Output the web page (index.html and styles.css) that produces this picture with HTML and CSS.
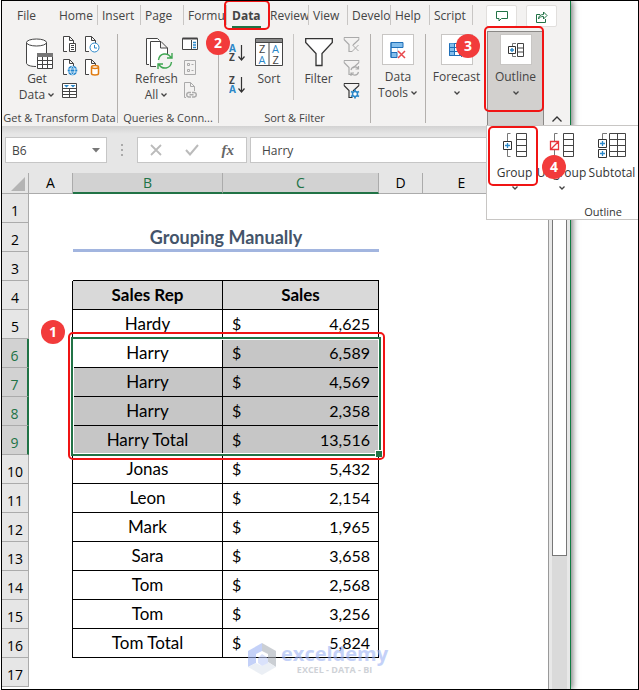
FILE: index.html
```html
<!DOCTYPE html>
<html lang="en">
<head>
    <meta charset="UTF-8">
    <title>Grouping Manually</title>
    <link rel="stylesheet" href="styles.css">
</head>
<body>
    <!-- shared icon shapes -->
    <svg class="defs" aria-hidden="true">
        <symbol id="chev" viewBox="0 0 8 6"><path d="M1.500 1.500 4 4l2.500-2.500" fill="none" stroke="#444" stroke-width="1.300"/></symbol>
        <symbol id="page" viewBox="0 0 16 17"><path d="M5 15.500H1.500V.5h6l4 4V7M7.500.5v4h4" fill="#fff" stroke="#444"/></symbol>
        <symbol id="funnel" viewBox="0 0 16 17"><path d="M.5 1.500h15v2L9.500 9M.5 1.500v2l5 5v7H9" fill="none" stroke="currentColor" stroke-width="1.200"/></symbol>
    </svg>

    <div class="frame">
        <div class="window">
            <div class="ribbon">
                <div class="tabs">
                    <button class="tab file">File</button>
                    <button class="tab">Home</button>
                    <button class="tab">Insert</button>
                    <button class="tab">Page</button>
                    <button class="tab">Formulas</button>
                    <button class="tab narrow active"><span>Data</span></button>
                    <button class="tab">Review</button>
                    <button class="tab narrow">View</button>
                    <button class="tab">Developer</button>
                    <button class="tab narrow">Help</button>
                    <button class="tab">Script</button>
                    <div class="actions">
                        <button class="action" aria-label="Comments"><svg width="12" height="12" viewBox="0 0 12 12"><path d="M.5 1.500h11v7H5.500L3 11V8.500H.5z" fill="none" stroke="#217346"/></svg></button>
                        <button class="action" aria-label="Share"><svg width="13" height="13" viewBox="0 0 13 13"><path d="M5 4.500H1.500v8h9V9M3.500 9c0-3 2-4.500 5-4.500V2L12 5.500 8.500 9V6.500C6 6.500 4.500 7 3.500 9z" fill="none" stroke="#217346"/></svg></button>
                    </div>
                </div>

                <div class="groups">
                    <section class="group get-data">
                        <div class="tools">
                            <button class="big">
                                <svg width="28" height="32" viewBox="0 0 28 32"><path d="M1.500 4.500v21c0 2 4 3.500 10 3.500V27h10V4.500" fill="#fff"/><path d="M11 28.500C5 28.500 1.500 27 1.500 25V4.500M21.500 4.500V15" fill="none" stroke="#444"/><ellipse cx="11.500" cy="4.500" rx="10" ry="3.500" fill="#fff" stroke="#444"/><path d="M12.500 15.500h15v15h-15z" fill="#fff" stroke="#444"/><path d="M12 15h16v4H12z" fill="#777"/><path d="M12.500 22.500h15M12.500 26.500h15M17.500 19v11M22.500 19v11" stroke="#444"/></svg>
                                <span>Get</span><span>Data <svg class="chev"><use href="#chev"/></svg></span>
                            </button>
                            <div class="small two">
                                <button aria-label="From Text/CSV"><svg width="16" height="17" viewBox="0 0 16 17"><use href="#page"/><path d="M7.500 7.500h6v8h-6z" fill="#fff" stroke="#444"/><path d="M9 9.500h3M9 11.500h3M9 13.500h3" stroke="#444"/></svg></button>
                                <button aria-label="Recent Sources"><svg width="16" height="17" viewBox="0 0 16 17"><use href="#page"/><circle cx="10.500" cy="11.500" r="4.500" fill="#fff" stroke="#2b88c9"/><path d="M10.500 9v3H13" fill="none" stroke="#2b88c9"/></svg></button>
                                <button aria-label="From Web"><svg width="16" height="17" viewBox="0 0 16 17"><use href="#page"/><circle cx="10.500" cy="11.500" r="4.800" fill="#1e83cc"/><path d="M6 10h9M6 13h9M10.500 7c-3 3-3 6 0 9M10.500 7c3 3 3 6 0 9" fill="none" stroke="#fff" stroke-width=".8"/></svg></button>
                                <button aria-label="Existing Connections"><svg width="16" height="17" viewBox="0 0 16 17"><use href="#page"/><path d="M7.500 8.500v6c0 2 7 2 7 0v-6" fill="#fff" stroke="#e07b10" stroke-width="1.500"/><ellipse cx="11" cy="8" rx="3.500" ry="1.500" fill="#fff" stroke="#e07b10" stroke-width="1.500"/></svg></button>
                                <button aria-label="From Table/Range"><svg width="16" height="17" viewBox="0 0 16 17"><path d="M.5 1.500h14v14H.5z" fill="#fff" stroke="#444"/><path d="M.5 6.500h14M.5 9.500h14M.5 12.500h14M7.500 6.500v9" stroke="#444"/><path d="M2 3h5L4.500 5.500zM8.500 3h5L11 5.500z" fill="#2b88c9"/></svg></button>
                            </div>
                        </div>
                        <h2>Get &amp; Transform Data</h2>
                    </section>

                    <section class="group queries">
                        <div class="tools">
                            <button class="big">
                                <svg width="28" height="32" viewBox="0 0 28 32"><path d="M4 26.500H1.500V.5h11l2 2" fill="#fff" stroke="#444"/><path d="M11 28.500H5.500v-25H16l6.500 6.500v6M15.500 3.500V10h7" fill="#fff" stroke="#444"/><circle cx="20" cy="23" r="7" fill="#f3f2f1"/><path d="M13.500 22c1-7 9-8 12.500-2.500M27 15v5h-5M26.500 24c-1 7-9 8-12.500 2.500M13 31v-5h5" fill="none" stroke="#3fa652" stroke-width="1.400"/></svg>
                                <span>Refresh</span><span>All <svg class="chev"><use href="#chev"/></svg></span>
                            </button>
                            <div class="small one">
                                <button aria-label="Queries and Connections"><svg width="16" height="17" viewBox="0 0 16 17"><path d="M.5 2.500h15v11H.5z" fill="#fff" stroke="#444"/><path d="M.5 1.500h15v2H.5z" fill="#444"/><path d="M9.500 4v9.500" stroke="#444"/><path d="M11 6.500h3M11 9h3M11 11.500h3" stroke="#2b88c9" stroke-width="1.500"/></svg></button>
                                <button aria-label="Properties" disabled><svg width="16" height="17" viewBox="0 0 16 17"><g fill="none" stroke="#aaa"><path d="M2.500 1.500h11v14h-11zM5.500 4.500h2v2h-2zM5.500 10.500h2v2h-2zM9.500 5.500h2M9.500 11.500h2"/></g></svg></button>
                                <button aria-label="Edit Links" disabled><svg width="16" height="17" viewBox="0 0 16 17"><g fill="none" stroke="#aaa"><path d="M4 15.500H2.500V.5h6l4 4V9M8.500.5v4h4"/><path d="M9 10.500H6.500a2.300 2.300 0 0 0 0 4.500H9M10 10.500h2.500a2.300 2.300 0 0 1 0 4.500H10M7.500 12.800h4" stroke-width="1.500"/></g></svg></button>
                            </div>
                        </div>
                        <h2>Queries &amp; Conn...</h2>
                    </section>

                    <section class="group sorting">
                        <div class="tools">
                            <div class="orders">
                                <button aria-label="Sort A to Z"><svg width="18" height="18" viewBox="0 0 18 18"><text x="0" y="8" class="az blue">A</text><text x="0" y="17" class="az">Z</text><path d="M12.500 1v15M9.500 12.500l3 3.500 3-3.500" fill="none" stroke="#333" stroke-width="1.200"/></svg></button>
                                <button aria-label="Sort Z to A"><svg width="18" height="18" viewBox="0 0 18 18"><text x="0" y="8" class="az">Z</text><text x="0" y="17" class="az blue">A</text><path d="M12.500 1v15M9.500 12.500l3 3.500 3-3.500" fill="none" stroke="#333" stroke-width="1.200"/></svg></button>
                            </div>
                            <button class="big">
                                <svg width="28" height="32" viewBox="0 0 28 32"><path d="M.5 .5h27v27H.5z" fill="#fff" stroke="#444"/><path d="M1 1h26v3H1z" fill="#888"/><path d="M.5 4.500h27M14 4.500v23" stroke="#444"/><g class="sort-letters"><text x="4" y="15">Z</text><text x="3.500" y="26" class="blue">A</text><text x="17" y="15" class="blue">A</text><text x="17.500" y="26">Z</text></g></svg>
                                <span>Sort</span>
                            </button>
                            <button class="big filter">
                                <svg width="28" height="32" viewBox="0 0 28 32"><path d="M.7.7h26.600v3.800L17 15.500v12h-6v-12L.7 4.500z" fill="#fff" stroke="#333" stroke-width="1.300"/></svg>
                                <span>Filter</span>
                            </button>
                            <div class="small one">
                                <button aria-label="Clear" disabled><svg class="dim" width="17" height="17" viewBox="0 0 16 17"><use href="#funnel"/><path d="m9 9 6 6M15 9l-6 6" stroke="currentColor"/></svg></button>
                                <button aria-label="Reapply" disabled><svg class="dim" width="17" height="17" viewBox="0 0 16 17"><use href="#funnel"/><path d="M7.500 11c1-4 6-4 7.500-1M15 7v3h-3M15 13c-1 4-6 4-7.500 1M7.500 17v-3h3" fill="none" stroke="currentColor" stroke-width="1.200"/></svg></button>
                                <button aria-label="Advanced"><svg class="dark" width="17" height="17" viewBox="0 0 16 17"><use href="#funnel"/><circle cx="11.500" cy="12" r="2.500" fill="#fff" stroke="#2b88c9" stroke-width="1.500"/><path d="M11.500 7.500v2M11.500 14.500v2M7.500 9.500l2 1M13.500 13.500l2 1M7.500 14.500l2-1M13.500 10.500l2-1" stroke="#2b88c9" stroke-width="1.800"/></svg></button>
                            </div>
                        </div>
                        <h2>Sort &amp; Filter</h2>
                        <span class="badge badge-2">2</span>
                    </section>

                    <section class="group collapsed">
                        <button class="drop">
                            <span class="tile"><svg width="16" height="18" viewBox="0 0 16 18"><path d="M1 1.500h12v5H1zM1 6.500h6v5H1zM1 11.500h6v5H1z" fill="#83beec" stroke="#1e6fb8"/><path d="M1.500 7h6v4.500h-6z" fill="#fff"/><path d="M1 1.500v15h6M1 11.500h6" fill="none" stroke="#1e6fb8"/><path d="m8 10 7 7M15 10l-7 7" stroke="#e8484d" stroke-width="1.500"/></svg></span>
                            <span>Data</span><span>Tools <svg class="chev"><use href="#chev"/></svg></span>
                        </button>
                    </section>

                    <section class="group forecast">
                        <button class="drop">
                            <span class="tile"><svg width="16" height="18" viewBox="0 0 16 18"><path d="M.5 2.500h15v12H.5z" fill="#fff" stroke="#1e6fb8"/><path d="M.5 2.500h5v12h-5z" fill="#83beec"/><path d="M.5 2.500v12H11M.5 6.500h15M.5 10.500h15M5.500 2.500v12M10.500 2.500v12M12 16l3-3" fill="none" stroke="#1e6fb8"/></svg></span>
                            <span>Forecast</span><span><svg class="chev"><use href="#chev"/></svg></span>
                        </button>
                        <span class="badge badge-3">3</span>
                    </section>

                    <section class="group outline">
                        <button class="drop">
                            <span class="tile"><svg width="18" height="16" viewBox="0 0 18 16"><path d="M9 1.500H5.500V4M5.500 12v2.500H9" fill="none" stroke="#777"/><path d="M1.500 4.500h7v7h-7z" fill="#fff" stroke="#333"/><path d="M3 8h4M5 6v4" stroke="#2b88c9" stroke-width="1.400"/><path d="M10.500 1.500h6v13h-6zM10.500 6h6M10.500 10h6" fill="#fff" stroke="#444"/></svg></span>
                            <span>Outline</span><span><svg class="chev"><use href="#chev"/></svg></span>
                        </button>
                        <div class="mark mark-outline"></div>
                        <div class="popup">
                            <div class="popup-tools">
                                <button>
                                    <svg width="26" height="26" viewBox="0 0 26 26"><path d="M8.500 1.500H5.500V9M5.500 18v6.500H8.500" fill="none" stroke="#777"/><path d="M1.500 9.500h8v8h-8z" fill="#fff" stroke="#333"/><path d="M3 13.500h5M5.500 11v5" stroke="#2b88c9" stroke-width="1.300"/><path d="M14.500 1.500h10v23h-10zM14.500 7.500h10M14.500 13.500h10M14.500 19.500h10" fill="#fff" stroke="#444"/></svg>
                                    <span>Group</span><svg class="chev"><use href="#chev"/></svg>
                                </button>
                                <button>
                                    <svg width="26" height="26" viewBox="0 0 26 26"><path d="M8.500 1.500H5.500V9M5.500 18v6.500H8.500" fill="none" stroke="#777"/><path d="M1.500 9.500h8v8h-8zM2 17l7-7" fill="#fff" stroke="#e8363c" stroke-width="1.300"/><path d="M14.500 1.500h10v23h-10zM14.500 7.500h10M14.500 13.500h10M14.500 19.500h10" fill="#fff" stroke="#444"/></svg>
                                    <span>Ungroup</span><svg class="chev"><use href="#chev"/></svg>
                                </button>
                                <button>
                                    <svg width="30" height="26" viewBox="0 0 30 26"><path d="M10 1.500H5.500V7" fill="none" stroke="#777"/><path d="M1.500 7.500h8v8h-8zM1.500 17.500h8v8h-8z" fill="#fff" stroke="#333"/><path d="M3 11.500h5M5.500 9v5M3 21.500h5M5.500 19v5" stroke="#2b88c9" stroke-width="1.300"/><path d="M12.500 1.500h16v23h-16zM12.500 7.500h16M12.500 13.500h16M12.500 19.500h16M20.500 1.500v23" fill="#fff" stroke="#444"/></svg>
                                    <span>Subtotal</span>
                                </button>
                            </div>
                            <p>Outline</p>
                            <div class="mark mark-group"></div>
                            <span class="badge badge-4">4</span>
                        </div>
                    </section>
                    <button class="collapse" aria-label="Collapse the Ribbon"><svg width="12" height="8" viewBox="0 0 12 8"><path d="m1.500 6.500 4.500-4.500 4.500 4.500" fill="none" stroke="#333" stroke-width="1.300"/></svg></button>
                </div>
                <div class="mark mark-tab"></div>
            </div>

            <div class="formula-bar">
                <div class="name-box">
                    <input type="text" value="B6" aria-label="Name Box">
                    <svg width="8" height="5" viewBox="0 0 8 5"><path d="M0 0h8L4 4.500z" fill="#777"/></svg>
                </div>
                <svg class="grip" width="3" height="12" viewBox="0 0 3 12"><path d="M0 0h2v2H0zM0 5h2v2H0zM0 10h2v2H0z" fill="#aaa"/></svg>
                <div class="fx">
                    <button aria-label="Cancel"><svg width="12" height="12" viewBox="0 0 12 12"><path d="m1 1 10 10M11 1 1 11" stroke="#bbb" stroke-width="1.800"/></svg></button>
                    <button aria-label="Enter"><svg width="14" height="12" viewBox="0 0 14 12"><path d="m1 6 4 4.500L13 1" fill="none" stroke="#bbb" stroke-width="2"/></svg></button>
                    <button class="fx-btn"><i>fx</i></button>
                </div>
                <input class="formula" type="text" value="Harry" aria-label="Formula">
            </div>

            <div class="sheet">
                <div class="cells">
                    <table>
                        <colgroup><col class="c-head"><col class="c-a"><col class="c-b"><col class="c-c"><col class="c-a"><col></colgroup>
                        <thead>
                            <tr><th class="corner"><svg width="14" height="14" viewBox="0 0 14 14"><path d="M14 0v14H0z" fill="#b4b4b4"/></svg></th><th>A</th><th class="on">B</th><th class="on">C</th><th>D</th><th class="last">E</th></tr>
                        </thead>
                        <tbody>
                            <tr><th>1</th><td></td><td></td><td></td></tr>
                            <tr><th>2</th><td></td><td class="title" colspan="2">Grouping Manually</td></tr>
                            <tr><th>3</th><td></td><td class="above"></td><td class="above"></td></tr>
                            <tr class="row head"><th>4</th><td></td><td>Sales Rep</td><td>Sales</td></tr>
                            <tr class="row"><th>5</th><td></td><td>Hardy</td><td><div class="money"><span>$</span><span>4,625</span></div></td></tr>
                            <tr class="row sel first"><th>6</th><td></td><td>Harry</td><td><div class="money"><span>$</span><span>6,589</span></div></td></tr>
                            <tr class="row sel"><th>7</th><td></td><td>Harry</td><td><div class="money"><span>$</span><span>4,569</span></div></td></tr>
                            <tr class="row sel"><th>8</th><td></td><td>Harry</td><td><div class="money"><span>$</span><span>2,358</span></div></td></tr>
                            <tr class="row sel"><th>9</th><td></td><td>Harry Total</td><td><div class="money"><span>$</span><span>13,516</span></div></td></tr>
                            <tr class="row"><th>10</th><td></td><td>Jonas</td><td><div class="money"><span>$</span><span>5,432</span></div></td></tr>
                            <tr class="row"><th>11</th><td></td><td>Leon</td><td><div class="money"><span>$</span><span>2,154</span></div></td></tr>
                            <tr class="row"><th>12</th><td></td><td>Mark</td><td><div class="money"><span>$</span><span>1,965</span></div></td></tr>
                            <tr class="row"><th>13</th><td></td><td>Sara</td><td><div class="money"><span>$</span><span>3,658</span></div></td></tr>
                            <tr class="row"><th>14</th><td></td><td>Tom</td><td><div class="money"><span>$</span><span>2,568</span></div></td></tr>
                            <tr class="row"><th>15</th><td></td><td>Tom</td><td><div class="money"><span>$</span><span>3,256</span></div></td></tr>
                            <tr class="row"><th>16</th><td></td><td>Tom Total</td><td><div class="money"><span>$</span><span>5,824</span></div></td></tr>
                            <tr><th>17</th><td></td><td></td><td></td></tr>
                        </tbody>
                    </table>
                    <div class="selection"></div>
                    <div class="mark mark-rows"></div>
                    <span class="badge badge-1">1</span>
                    <div class="watermark">
                        <svg width="28" height="32" viewBox="0 0 28 32"><path d="M14 0 0 8v16l8-4v-9l6-3z" fill="#9db4f5"/><path d="m14 0 14 8v16l-8-5v-8l-6-3z" fill="#aab0b8"/><path d="m0 24 8-4 6 3 6-4 8 5-14 8z" fill="#dfe6ef"/><path d="m14 11 6 4v5l-6 3-4-3v-5z" fill="#c3cffa"/></svg>
                        <div><strong>exceldemy</strong><small>EXCEL - DATA - BI</small></div>
                    </div>
                </div>
                <div class="scroll"><div class="thumb"></div></div>
            </div>
        </div>
    </div>
</body>
</html>
```
FILE: styles.css
```css
* {
    box-sizing: border-box;
}
body {
    margin: 0;
    background: #fff;
    font-family: "Open Sans", "Noto Sans", sans-serif;
    font-size: 12px;
    color: #444;
}
button {
    font: inherit;
    color: inherit;
    background: none;
    border: none;
    padding: 0;
}
input {
    font: inherit;
    color: #444;
    min-width: 0;
    border: none;
    outline: none;
}
svg {
    display: block;
}
.defs {
    position: absolute;
    width: 0;
    height: 0;
}
.frame {
    min-height: 100vh;
    margin-left: 1px;
    border: 1px solid #000;
    display: flex;
    overflow: hidden;
}
.window {
    width: calc(100% - 67px);
    border-right: 1px solid #107c41;
    box-shadow: 2px 0 6px rgba(0,0,0,0.5);
    display: flex;
    flex-direction: column;
    background: #e6e6e6;
}

/* ribbon */
.ribbon {
    position: relative;
    background: #f3f2f1;
}
.tabs {
    display: flex;
    height: 30px;
    padding-top: 4px;
}
.tab {
    width: 43px;
    height: 20px;
    flex: none;
    padding-left: 4px;
    line-height: 22px;
    text-align: left;
    overflow: hidden;
    border-right: 1px solid #c8c6c4;
}
.tab.file {
    width: 53px;
    padding-left: 15px;
    border-right: none;
}
.tab.narrow {
    width: 39px;
}
.tab.active {
    height: 24px;
    padding: 0 0 0 5px;
    font-weight: bold;
    border: none;
}
.active span {
    display: block;
    width: 29px;
    height: 24px;
    border-bottom: 3px solid #217346;
}
.actions {
    display: flex;
    gap: 9px;
    margin-left: 13px;
}
.action {
    width: 31px;
    height: 22px;
    background: #fff;
    border: 1px solid #e1dfdd;
    border-radius: 2px;
    display: flex;
    align-items: center;
    justify-content: center;
}
.groups {
    display: flex;
    height: 95px;
    padding-top: 3px;
}
.group {
    position: relative;
    flex: none;
    height: 89px;
    border-right: 1px solid #b3b0ad;
    display: flex;
    flex-direction: column;
    justify-content: space-between;
}
.group h2 {
    margin: 0;
    font-size: 11px;
    font-weight: normal;
    line-height: 10px;
    text-align: center;
    white-space: nowrap;
}
.tools {
    display: flex;
}
.big, .drop {
    display: flex;
    flex-direction: column;
    align-items: center;
    line-height: 16px;
    white-space: nowrap;
}
.big {
    padding-top: 4px;
    justify-content: flex-start;
}
.big > svg {
    margin-bottom: 1px;
}
.big > span, .drop > span {
    display: flex;
    align-items: center;
    gap: 2px;
    min-height: 16px;
}
.chev {
    width: 8px;
    height: 6px;
}
.small {
    display: grid;
    padding-top: 2px;
    row-gap: 6px;
    align-content: start;
}
.small.two {
    grid-template-columns: 16px 16px;
    column-gap: 6px;
}
.get-data {
    width: 116px;
}
.get-data .tools {
    padding-left: 15px;
    gap: 5px;
}
.get-data .big {
    width: 40px;
}
.get-data .big > svg, .queries .big > svg {
    margin-left: 4px;
}
.queries {
    width: 101px;
}
.queries .tools {
    padding-left: 17px;
    gap: 4px;
}
.queries .big {
    width: 43px;
}
.sorting {
    width: 152px;
}
.sorting .tools {
    padding-left: 10px;
}
.orders {
    display: grid;
    gap: 14px;
    align-content: start;
    padding: 10px 8px 0 0;
}
.az {
    font-size: 10px;
    font-weight: bold;
    fill: #444;
}
.sort-letters {
    font-size: 11px;
    fill: #444;
}
.az.blue, .sort-letters .blue {
    fill: #2b88c9;
}
.sorting .filter {
    width: 50px;
    height: 66px;
    margin: 0 0 0 10px;
    border-left: 1px solid #c8c6c4;
}
.dim {
    color: #aaa;
}
.dark {
    color: #333;
}
.drop {
    justify-content: flex-start;
    width: 100%;
}
.drop > .tile {
    width: 32px;
    height: 31px;
    margin-bottom: 4px;
    justify-content: center;
    background: #fff;
    border: 1px solid #c8c6c4;
}
.collapsed {
    width: 55px;
}
.forecast {
    width: 61px;
    border-right: none;
}
.outline {
    width: 57px;
    height: 95px;
    margin-top: -3px;
    padding-top: 3px;
    background: #d2d0ce;
    border: 1px solid #8a8886;
    border-bottom: none;
}
.outline .drop {
    height: 74px;
    margin-top: -1px;
}
.collapse {
    align-self: flex-end;
    height: 14px;
    margin-left: 7px;
}
.popup {
    position: absolute;
    top: 93px;
    left: -2px;
    z-index: 2;
    width: 153px;
    height: 95px;
    background: #fff;
    border: 1px solid #c8c6c4;
    color: #333;
}
.popup-tools {
    display: flex;
    padding-top: 6px;
}
.popup-tools button {
    display: flex;
    flex-direction: column;
    align-items: center;
    justify-content: flex-start;
    width: 47px;
    height: 62px;
    flex: none;
    line-height: 16px;
}
.popup-tools button:first-child {
    margin-left: 4px;
}
.popup-tools button:last-child {
    width: 54px;
}
.popup-tools span {
    margin: 7px 0 4px;
}
.popup p {
    margin: 10px 16px 0 0;
    text-align: right;
    font-size: 11px;
    line-height: 16px;
}

/* numbered steps */
.mark {
    position: absolute;
    z-index: 3;
    border: 2px solid #f01414;
    border-radius: 5px;
    pointer-events: none;
}
.badge {
    position: absolute;
    z-index: 4;
    width: 24px;
    height: 24px;
    border-radius: 50%;
    background: #f23b3b;
    color: #fff;
    font-size: 14px;
    font-weight: bold;
    line-height: 24px;
    text-align: center;
}
.mark-tab {
    left: 222px;
    top: -1px;
    width: 46px;
    height: 30px;
}
.mark-outline {
    left: -4px;
    top: -6px;
    width: 60px;
    height: 86px;
}
.mark-group {
    left: 1px;
    top: 0;
    width: 50px;
    height: 60px;
}
.mark-rows {
    left: 66px;
    top: 159px;
    width: 317px;
    height: 128px;
}
.badge-1 {
    left: 39px;
    top: 147px;
}
.badge-2 {
    left: -13px;
    top: -3px;
}
.badge-3 {
    left: 30px;
    top: 0;
}
.badge-4 {
    left: 55px;
    top: 29px;
}

/* formula bar */
.formula-bar {
    display: flex;
    height: 47px;
    padding: 11px 0 10px 3px;
    background: linear-gradient(#d2d2d2, #e6e6e6 8px);
}
.name-box, .fx, .formula {
    background: #fff;
    border: 1px solid #c6c6c6;
}
.name-box {
    display: flex;
    align-items: center;
    width: 102px;
    padding: 0 6px;
}
.name-box input {
    flex: 1;
    padding: 0;
}
.grip {
    align-self: center;
    margin: 0 13px 0 14px;
}
.fx {
    display: flex;
    align-items: center;
    justify-content: space-between;
    width: 110px;
    padding: 0 12px;
    margin-right: 3px;
}
.fx-btn {
    font-family: "Liberation Serif", serif;
    font-size: 15px;
    font-weight: bold;
    color: #666;
}
.formula {
    flex: 1;
    padding: 0 11px;
}

/* sheet */
.sheet {
    display: flex;
    flex: 1;
}
.cells {
    position: relative;
    flex: 1;
    min-width: 0;
    background: #fff;
}
table {
    width: 100%;
    table-layout: fixed;
    border-collapse: separate;
    border-spacing: 0;
    font-family: Lato, "Open Sans", sans-serif;
    font-size: 17px;
    color: #000;
}
.c-head {
    width: 27px;
}
.c-a {
    width: 44px;
}
.c-b {
    width: 150px;
}
.c-c {
    width: 156px;
}
th, td {
    height: 29px;
    padding: 0;
    line-height: 20px;
    text-align: center;
}
th {
    font-family: "Open Sans", "Noto Sans", sans-serif;
    font-size: 14px;
    font-weight: normal;
    background: #e6e6e6;
    border-right: 1px solid #ababab;
    border-bottom: 1px solid #ababab;
}
thead th {
    height: 21px;
    line-height: 18px;
}
thead th.last {
    padding-right: 48px;
    border-right: none;
}
tbody th {
    padding-top: 6px;
}
.corner svg {
    margin: 1px 3px 0 auto;
}
th.on, .sel th {
    background: #d2d2d2;
    color: #217346;
}
th.on {
    border-bottom: 2px solid #217346;
}
.sel th {
    border-right: 2px solid #217346;
}
.title {
    padding-top: 2px;
    font-size: 18px;
    font-weight: bold;
    color: #44546a;
    border-bottom: 3px solid #a2b5df;
}
.above {
    border-bottom: 1px solid #000;
}
.row td:nth-child(2) {
    border-right: 1px solid #000;
}
.row td:nth-child(n+3) {
    border-right: 1px solid #000;
    border-bottom: 1px solid #000;
}
.row.head td:nth-child(n+3) {
    background: #d9d9d9;
    font-weight: bold;
}
.row.sel td:nth-child(n+3) {
    background: #c6c6c6;
}
.row.first td:nth-child(3) {
    background: #fff;
}
.money {
    display: flex;
    justify-content: space-between;
    padding: 0 8px 0 9px;
    font-size: 16px;
}
.selection {
    position: absolute;
    left: 69px;
    top: 164px;
    width: 310px;
    height: 119px;
    border: 2px solid #217346;
    box-shadow: inset 0 0 0 1px #fff;
}
.selection::after {
    content: "";
    position: absolute;
    right: -3px;
    bottom: -3px;
    width: 6px;
    height: 6px;
    background: #217346;
    border: 1px solid #fff;
    border-width: 1px 0 0 1px;
}
.scroll {
    width: 22px;
    padding: 0 3px;
    border-left: 1px solid #999;
    background: linear-gradient(#dadada, #dadada) center / 15px 100% no-repeat #e8e8e8;
}
.thumb {
    width: 15px;
    height: 383px;
    background: #fff;
    border: 1px solid #777;
}
.watermark {
    position: absolute;
    left: 246px;
    top: 470px;
    display: flex;
    gap: 5px;
    opacity: 0.6;
    color: #9db4f5;
}
.watermark strong {
    display: block;
    font-size: 20px;
    line-height: 22px;
}
.watermark small {
    display: block;
    font-size: 9px;
    font-weight: bold;
    line-height: 9px;
    text-align: center;
    color: #b0b5bd;
}
```
